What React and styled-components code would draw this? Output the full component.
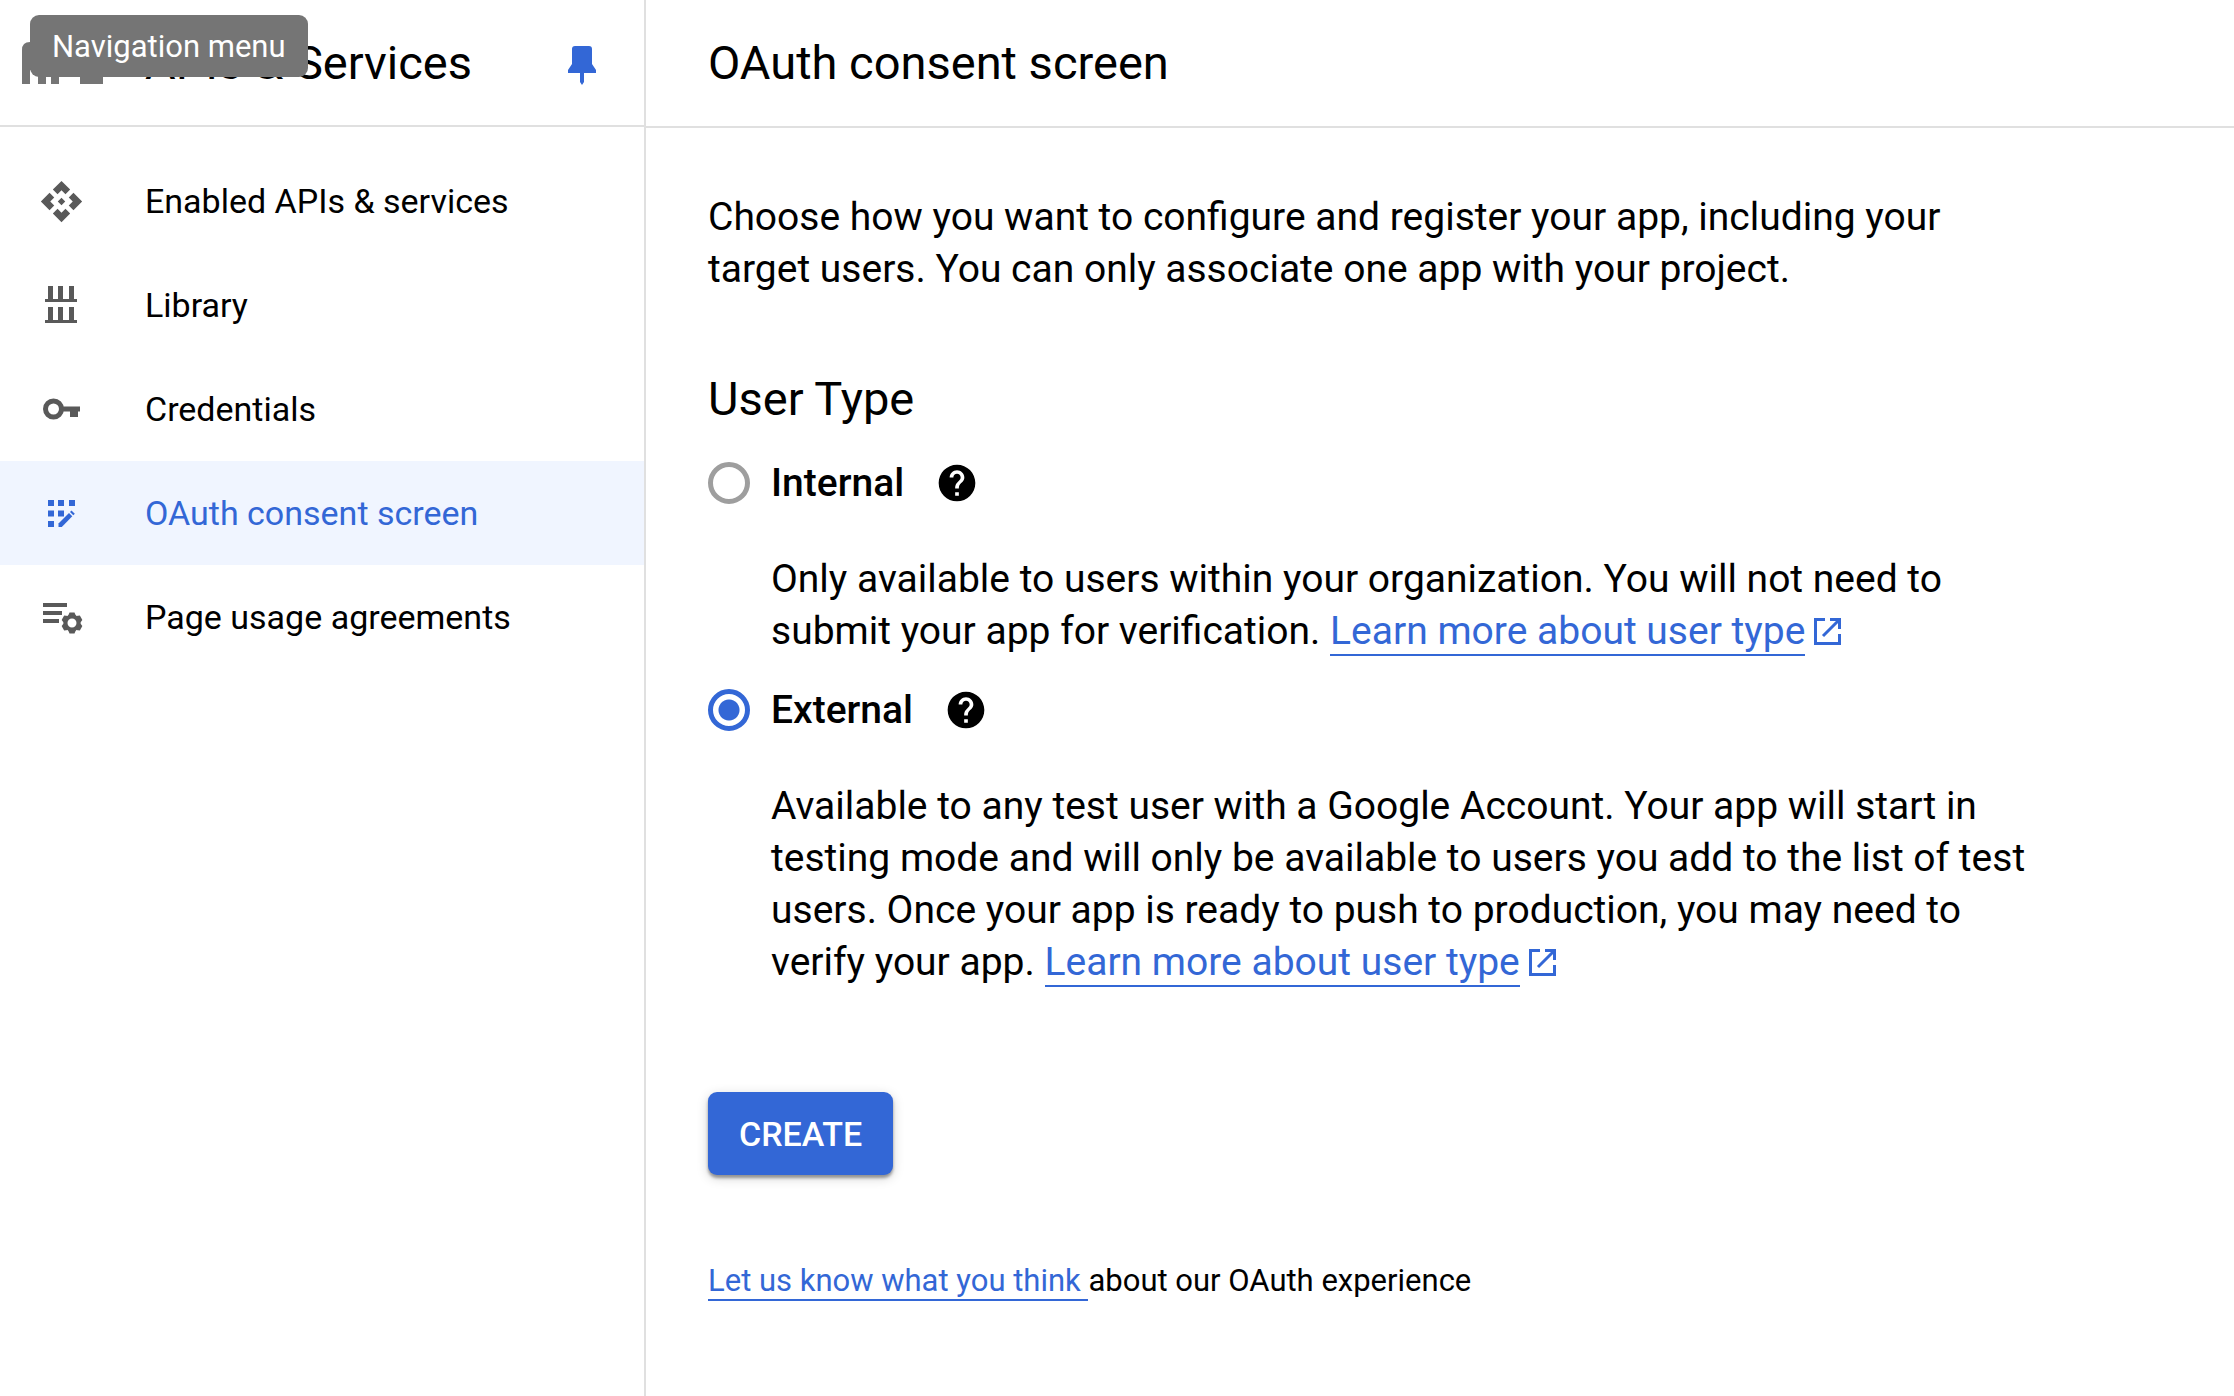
import React, { useState } from "react";
import styled, { createGlobalStyle, css } from "styled-components";
import { MdApi, MdHelp } from "react-icons/md";

const blue = "#3367d6";
const line = "#e0e0e0";
const iconGray = "#595959";

const GlobalStyle = createGlobalStyle`
  *, *::before, *::after { box-sizing: border-box; }
  body {
    margin: 0;
    background: #fff;
    color: #000;
    font-family: Roboto, "Liberation Sans", sans-serif;
    font-size: 39px;
    line-height: 52px;
  }
  h1, h2, p, ul { margin: 0; padding: 0; }
`;

const Page = styled.div`
  display: grid;
  grid-template-columns: 646px minmax(0, 1fr);
  min-height: 100vh;
`;

const Sidebar = styled.aside`
  border-right: 2px solid ${line};
`;

const SidebarHeader = styled.div`
  position: relative;
  display: flex;
  align-items: center;
  height: 127px;
  padding: 0 48px 0 22px;
  border-bottom: 2px solid ${line};
`;

const titleText = css`
  font-size: 47px;
  line-height: 56px;
  font-weight: 400;
`;

const ProductTitle = styled.h2`
  ${titleText}
  flex: 1;
  margin-left: 41px;
`;

const IconButton = styled.button`
  display: flex;
  padding: 0;
  border: 0;
  background: none;
  color: ${(p) => p.$color || "inherit"};
  cursor: pointer;
`;

const Tooltip = styled.div`
  position: absolute;
  top: 15px;
  left: 30px;
  padding: 12px 22px 10px;
  border-radius: 9px;
  background: #757575;
  color: #fff;
  font-size: 31px;
  line-height: 40px;
  white-space: nowrap;
`;

const NavList = styled.ul`
  padding: 22px 0;
  list-style: none;
`;

const NavLink = styled.a`
  display: flex;
  align-items: center;
  height: 104px;
  padding-left: 38px;
  gap: 61px;
  font-size: 34px;
  line-height: 44px;
  text-decoration: none;
  color: ${(p) => (p.$active ? blue : "#000")};
  background: ${(p) => (p.$active ? "#f0f5ff" : "transparent")};
`;

const NavIcon = styled.span`
  display: flex;
  align-items: center;
  justify-content: center;
  width: 46px;
  color: ${(p) => (p.$active ? blue : iconGray)};
`;

const MainHeader = styled.header`
  display: flex;
  align-items: center;
  height: 128px;
  padding: 0 62px;
  border-bottom: 2px solid ${line};
`;

const PageTitle = styled.h1`
  ${titleText}
`;

const Content = styled.form`
  max-width: 1464px;
  padding: 63px 62px;
`;

const UserTypes = styled.fieldset`
  min-width: 0;
  margin: 76px 0 0;
  padding: 0;
  border: 0;
`;

const Legend = styled.legend`
  ${titleText}
  padding: 0;
`;

const Option = styled.div`
  margin-top: ${(p) => (p.$first ? 35 : 32)}px;
`;

const OptionRow = styled.div`
  display: flex;
  align-items: center;
  height: 42px;
`;

const Radio = styled.input`
  appearance: none;
  width: 42px;
  height: 42px;
  margin: 0 21px 0 0;
  border: 5px solid #9e9e9e;
  border-radius: 50%;
  background: #fff;
  cursor: pointer;

  &:checked {
    border-color: ${blue};
    background: radial-gradient(circle, ${blue} 10px, #fff 11px);
  }
`;

const OptionLabel = styled.label`
  margin-right: 31px;
  font-weight: 500;
`;

const Description = styled.p`
  margin-top: 49px;
  padding-left: 63px;
`;

const TextLink = styled.a`
  color: ${blue};
  text-decoration: none;
  border-bottom: 2px solid ${blue};
`;

const ExternalIcon = styled.svg`
  margin-left: 9px;
  vertical-align: -1px;
  color: ${blue};
`;

const CreateButton = styled.button`
  display: block;
  height: 83px;
  margin-top: 104px;
  padding: 0 31px;
  border: 0;
  border-radius: 9px;
  background: ${blue};
  color: #fff;
  font: 500 34px/44px Roboto, "Liberation Sans", sans-serif;
  box-shadow: 0 3px 3px rgba(0, 0, 0, 0.35), 0 3px 12px rgba(0, 0, 0, 0.18);
  cursor: pointer;
`;

const Feedback = styled.p`
  margin-top: 86px;
  font-size: 31px;
  line-height: 40px;
`;

function ApiLogo() {
  return (
    <svg width="82" height="42" viewBox="0 0 82 42" fill="#757575" aria-hidden="true">
      <path d="M0 42V8Q0 0 8 0H16Q24 0 24 8V42H16V28H8V42Z" />
      <path d="M29 0H44Q52 0 52 12T44 28H37V42H29Z" />
      <path d="M58 0H81V8H74V34H81V42H58V34H66V8H58Z" />
    </svg>
  );
}

function PinIcon() {
  return (
    <svg width="28" height="45" viewBox="0 -6 28 45" fill="currentColor" aria-hidden="true">
      <path d="M7 0h14q3 0 3 3v15l4 6v3H16v9l-2 3-2-3v-9H0v-3l4-6V3q0-3 3-3z" />
    </svg>
  );
}

function LibraryIcon() {
  return (
    <svg width="32" height="38" viewBox="0 0 32 38" fill="currentColor" aria-hidden="true">
      <path d="M3 0h5v13h5V0h5v13h6V0h5v13h3v3H0v-3h3zM3 21h5v13h5V21h5v13h6V21h5v13h3v3H0v-3h3z" />
    </svg>
  );
}

function KeyIcon() {
  return (
    <svg width="38" height="22" viewBox="-1 0 38 22" fill="currentColor" aria-hidden="true">
      <circle cx="10.5" cy="11" r="8" fill="none" stroke="currentColor" strokeWidth="5" />
      <path d="M20 8.500h17v5H35v5.500h-8v-5.500h-7z" />
    </svg>
  );
}

function ConsentIcon() {
  return (
    <svg width="27" height="27" viewBox="0 0 27 27" fill="currentColor" aria-hidden="true">
      <path d="M0 0h6v6H0zM10 0h6v6h-6zM21 0h6v6h-6zM0 10.500h6v6H0zM10 10.500h6v6h-6zM0 21h6v6H0z" />
      <path d="M10.500 27v-3.500L21 13l3.300 3.300L13.800 27z" />
      <path d="M22 12l1.500-1.500 3.300 3.300-1.500 1.500z" />
    </svg>
  );
}

function AgreementsIcon() {
  const teeth = [0, 60, 120, 180, 240, 300];
  return (
    <svg width="43" height="34" viewBox="-3 -3 43 34" fill="currentColor" aria-hidden="true">
      <path d="M0 0h24v4H0zM0 8h19v4H0zM0 16h16v4H0z" />
      <circle cx="29" cy="20" r="6.500" fill="none" stroke="currentColor" strokeWidth="4" />
      {teeth.map((a) => (
        <path key={a} d="M25 13l1.500-3.500h5l1.500 3.500z" transform={`rotate(${a} 29 20)`} />
      ))}
    </svg>
  );
}

function OpenInNew() {
  return (
    <ExternalIcon width="27" height="27" viewBox="0 0 27 27" fill="none" stroke="currentColor" strokeWidth="3" aria-hidden="true">
      <path d="M11 1.500H1.500V25.500H25.500V16M16 1.500H25.500V11M25 2L9 18" />
    </ExternalIcon>
  );
}

const navItems = [
  { label: "Enabled APIs & services", icon: <MdApi size={45} /> },
  { label: "Library", icon: <LibraryIcon /> },
  { label: "Credentials", icon: <KeyIcon /> },
  { label: "OAuth consent screen", icon: <ConsentIcon />, active: true },
  { label: "Page usage agreements", icon: <AgreementsIcon /> },
];

const userTypes = [
  {
    id: "internal",
    label: "Internal",
    text: "Only available to users within your organization. You will not need to submit your app for verification.",
  },
  {
    id: "external",
    label: "External",
    text: "Available to any test user with a Google Account. Your app will start in testing mode and will only be available to users you add to the list of test users. Once your app is ready to push to production, you may need to verify your app.",
  },
];

export default function App() {
  const [userType, setUserType] = useState("external");
  return (
    <>
      <GlobalStyle />
      <Page>
        <Sidebar>
          <SidebarHeader>
            <IconButton type="button" aria-label="Navigation menu">
              <ApiLogo />
            </IconButton>
            <ProductTitle>APIs &amp; Services</ProductTitle>
            <IconButton type="button" aria-label="Unpin menu" $color={blue}>
              <PinIcon />
            </IconButton>
            <Tooltip role="tooltip">Navigation menu</Tooltip>
          </SidebarHeader>
          <nav>
            <NavList>
              {navItems.map((item) => (
                <li key={item.label}>
                  <NavLink href="#" $active={item.active} aria-current={item.active ? "page" : undefined}>
                    <NavIcon $active={item.active}>{item.icon}</NavIcon>
                    {item.label}
                  </NavLink>
                </li>
              ))}
            </NavList>
          </nav>
        </Sidebar>
        <main>
          <MainHeader>
            <PageTitle>OAuth consent screen</PageTitle>
          </MainHeader>
          <Content onSubmit={(e) => e.preventDefault()}>
            <p>
              Choose how you want to configure and register your app, including your target users. You can only
              associate one app with your project.
            </p>
            <UserTypes>
              <Legend>User Type</Legend>
              {userTypes.map((type, i) => (
                <Option key={type.id} $first={i === 0}>
                  <OptionRow>
                    <Radio
                      type="radio"
                      name="user-type"
                      id={type.id}
                      checked={userType === type.id}
                      onChange={() => setUserType(type.id)}
                    />
                    <OptionLabel htmlFor={type.id}>{type.label}</OptionLabel>
                    <IconButton type="button" aria-label={`Help for ${type.label}`}>
                      <MdHelp size={44} />
                    </IconButton>
                  </OptionRow>
                  <Description>
                    {type.text} <TextLink href="#">Learn more about user type</TextLink>
                    <OpenInNew />
                  </Description>
                </Option>
              ))}
            </UserTypes>
            <CreateButton type="submit">CREATE</CreateButton>
            <Feedback>
              <TextLink href="#">Let us know what you think </TextLink>about our OAuth experience
            </Feedback>
          </Content>
        </main>
      </Page>
    </>
  );
}
